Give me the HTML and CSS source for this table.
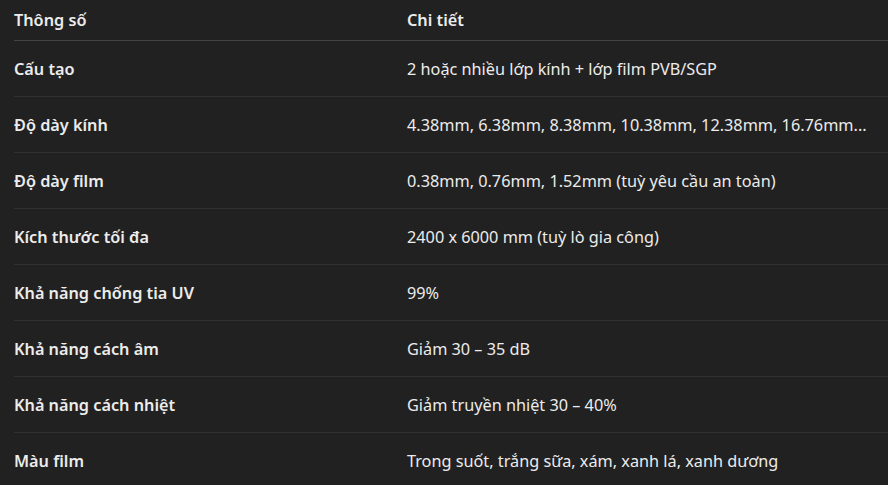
FILE: index.html
```html
<!DOCTYPE html>
<html lang="vi">
<head>
<meta charset="utf-8">
<link rel="stylesheet" href="styles.css">
</head>
<body>
<div class="wrap">
<table class="spec">
<thead>
<tr><th class="c1">Thông số</th><th class="c2">Chi tiết</th></tr>
</thead>
<tbody>
<tr><td class="c1">Cấu tạo</td><td class="c2">2 hoặc nhiều lớp kính + lớp film PVB/SGP</td></tr>
<tr><td class="c1">Độ dày kính</td><td class="c2">4.38mm, 6.38mm, 8.38mm, 10.38mm, 12.38mm, 16.76mm...</td></tr>
<tr><td class="c1">Độ dày film</td><td class="c2">0.38mm, 0.76mm, 1.52mm (tuỳ yêu cầu an toàn)</td></tr>
<tr><td class="c1">Kích thước tối đa</td><td class="c2">2400 x 6000 mm (tuỳ lò gia công)</td></tr>
<tr><td class="c1">Khả năng chống tia UV</td><td class="c2">99%</td></tr>
<tr><td class="c1">Khả năng cách âm</td><td class="c2">Giảm 30 – 35 dB</td></tr>
<tr><td class="c1">Khả năng cách nhiệt</td><td class="c2">Giảm truyền nhiệt 30 – 40%</td></tr>
<tr><td class="c1">Màu film</td><td class="c2">Trong suốt, trắng sữa, xám, xanh lá, xanh dương</td></tr>
</tbody>
</table>
</div>
</body>
</html>
```

FILE: styles.css
```css
html, body {
  margin: 0;
  padding: 0;
  background: #212121;
}
body {
  font-family: "Noto Sans", "Open Sans", sans-serif;
  font-size: 16.25px;
  color: #ececec;
  overflow: hidden;
}
.wrap {
  padding-left: 14px;
}
.spec {
  width: 874px;
  border-collapse: collapse;
  table-layout: fixed;
}
.spec th {
  height: 40px;
  padding: 0;
  text-align: left;
  font-weight: 600;
  vertical-align: middle;
  border-bottom: 1px solid #444444;
}
.spec td {
  height: 55px;
  padding: 0;
  vertical-align: middle;
  border-bottom: 1px solid #303030;
}
.spec td.c1 {
  font-weight: 600;
}
.spec .c1 {
  width: 393px;
}
```
